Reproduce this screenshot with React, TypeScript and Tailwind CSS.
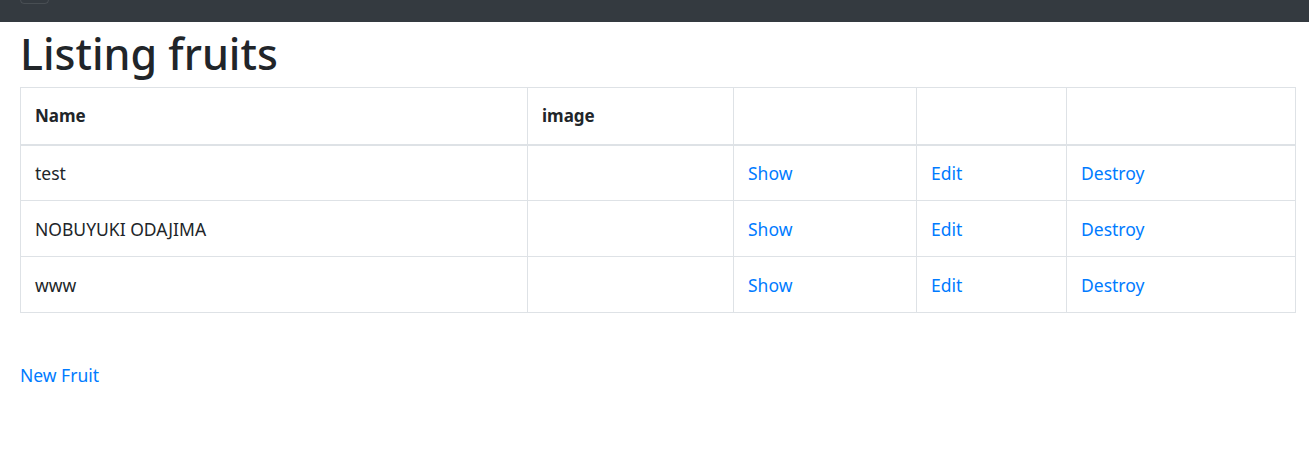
import React from "react";

const rows = ["test", "NOBUYUKI ODAJIMA", "www"];

export default function App() {
  const font = { fontFamily: '"Noto Sans", "Open Sans", sans-serif' };
  return (
    <div className="min-h-[459px] bg-white text-[#212529]" style={font}>
      <nav className="h-[22px] overflow-hidden bg-[#343a40] px-[20px]">
        <div className="-mt-[30px] h-[34px] w-[29px] rounded border border-white/10" />
      </nav>
      <div className="pl-[20px] pr-[13px]">
        <h1 className="mt-[7px] mb-[8px] text-[43px] leading-[50px] font-medium">Listing fruits</h1>
        <table className="w-full table-fixed border-collapse border border-[#dee2e6] text-[17.5px] leading-[26px]">
          <colgroup>
            <col className="w-[507px]" />
            <col className="w-[206px]" />
            <col className="w-[183px]" />
            <col className="w-[150px]" />
            <col />
          </colgroup>
          <thead>
            <tr className="h-[57px]">
              <th className="border border-b-2 border-[#dee2e6] px-[14px] text-left align-middle text-[17px] font-bold">Name</th>
              <th className="border border-b-2 border-[#dee2e6] px-[14px] text-left align-middle text-[17px] font-bold">image</th>
              <th className="border border-b-2 border-[#dee2e6] px-[14px]" />
              <th className="border border-b-2 border-[#dee2e6] px-[14px]" />
              <th className="border border-b-2 border-[#dee2e6] px-[14px]" />
            </tr>
          </thead>
          <tbody>
            {rows.map((r) => (
              <tr key={r} className="h-[56px]">
                <td className="border border-[#dee2e6] px-[14px] align-middle">{r}</td>
                <td className="border border-[#dee2e6] px-[14px] align-middle" />
                <td className="border border-[#dee2e6] px-[14px] align-middle">
                  <a className="text-[#007bff]" href="#">Show</a>
                </td>
                <td className="border border-[#dee2e6] px-[14px] align-middle">
                  <a className="text-[#007bff]" href="#">Edit</a>
                </td>
                <td className="border border-[#dee2e6] px-[14px] align-middle">
                  <a className="text-[#007bff]" href="#">Destroy</a>
                </td>
              </tr>
            ))}
          </tbody>
        </table>
        <div className="mt-[49px] text-[17.5px] leading-[26px]">
          <a className="text-[#007bff]" href="#">New Fruit</a>
        </div>
      </div>
    </div>
  );
}
